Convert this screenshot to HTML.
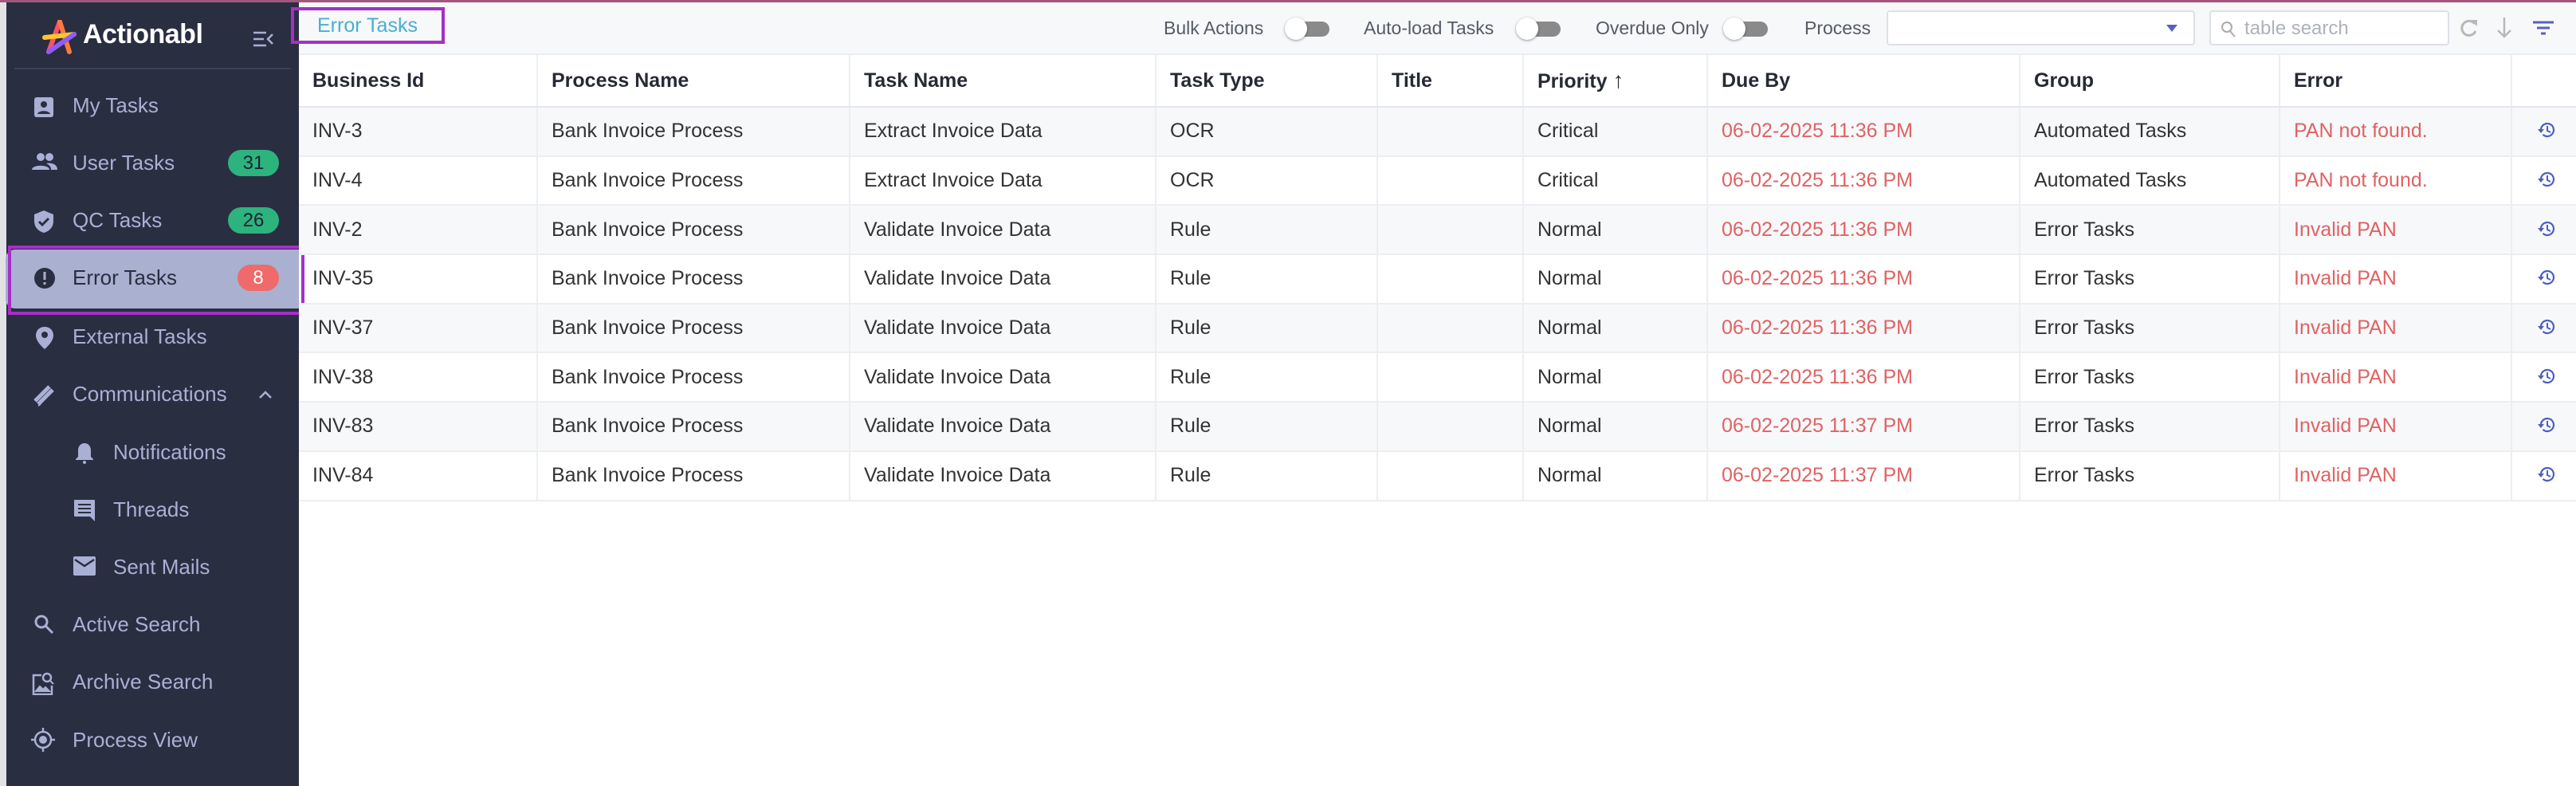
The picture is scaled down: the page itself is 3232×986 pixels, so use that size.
<!DOCTYPE html>
<html><head><meta charset="utf-8"><style>
*{box-sizing:border-box;margin:0;padding:0}
body{width:3232px;height:986px;overflow:hidden;background:#fff;font-family:"Liberation Sans",sans-serif;position:relative}
.topline{position:absolute;left:0;top:0;width:3232px;height:3px;background:#a4557e;z-index:5}
.strip{position:absolute;left:0;top:0;width:8px;height:986px;background:#e2e2e4}
.side{position:absolute;left:8px;top:0;width:367px;height:986px;background:#2a2e41}
.logo{position:absolute;left:96px;top:24px;font-size:34px;font-weight:bold;color:#fff;letter-spacing:-0.5px}
.div{position:absolute;left:10px;top:85px;width:347px;height:2px;background:#3d4256}
.nav{position:absolute;left:0;width:367px;height:60px;color:#a9b0d4;font-size:26px;line-height:60px}
.nav span.t{position:absolute;left:83px}
.nav.sub span.t{left:134px}
.nav svg{position:absolute;top:17px}
.badge{position:absolute;right:25px;top:14px;width:64px;height:33px;border-radius:17px;background:#2db37e;color:#1b2230;font-size:24px;line-height:33px;text-align:center}
.sel{position:absolute;left:7px;top:313px;width:368px;height:74px;background:#a9b0d0;border-radius:12px 0 0 12px}
.pbox{position:absolute;border:4px solid #a52fc7}
.head{position:absolute;left:375px;top:3px;width:2857px;height:66px;background:#f7f8fa;border-bottom:2px solid #eceef2}
.crumb{position:absolute;left:375px;top:18px;font-size:25px;color:#4aaed0;padding-left:23px}
.lbl{position:absolute;top:22px;font-size:23px;color:#555a66}
.tog{position:absolute;top:22px;width:56px;height:28px}
.tog .tr{position:absolute;left:10px;top:5px;width:46px;height:19px;border-radius:10px;background:#8a8a8a}
.tog .kn{position:absolute;left:0;top:0;width:28px;height:28px;border-radius:50%;background:#fff;box-shadow:0 1px 3px rgba(0,0,0,.4)}
.box{position:absolute;top:13px;height:44px;background:#fff;border:2px solid #dde0e6;border-radius:4px}
table{position:absolute;left:375px;top:69px;border-collapse:collapse;table-layout:fixed;width:2857px}
td,th{height:61.7px;padding:0 0 0 17px;text-align:left;font-size:25px;color:#333;border-bottom:2px solid #eceef1;border-right:2px solid #eceef1;white-space:nowrap}
th{height:65px;font-weight:bold;color:#262a33;font-size:25px;border-bottom:2px solid #e4e6ea}
tr.o td{background:#f7f8fa}
td.r{color:#e06262}
</style></head><body>
<div class="topline"></div>
<div class="strip"></div>
<div class="side">
 <svg style="position:absolute;left:45px;top:25px" width="44" height="44" viewBox="0 0 44 44"><path d="M22 2 L8 40" stroke="#ff4f6d" stroke-width="6" stroke-linecap="round"/><path d="M22 2 L34 40" stroke="#ff7a3d" stroke-width="6" stroke-linecap="round"/><path d="M3 22 L40 18" stroke="#ffc62e" stroke-width="6" stroke-linecap="round"/><path d="M8 40 L40 18" stroke="#8e5cf7" stroke-width="6" stroke-linecap="round"/></svg>
 <div class="logo">Actionabl</div>
 <svg style="position:absolute;left:308px;top:38px" width="28" height="22" viewBox="0 0 28 22"><path d="M2 3h16M2 11h13M2 19h16M26 5l-6 6 6 6" stroke="#a9b0d4" stroke-width="2.5" fill="none"/></svg>
 <div class="div"></div>
</div>
<div class="sel"></div>
<div style="position:absolute;left:8px;top:0;width:367px;height:986px">
 <div class="nav" style="top:102px"><svg style="left:34px" width="26" height="28" viewBox="0 0 26 28"><rect x="1" y="3" width="24" height="25" rx="3" fill="#a9b0d4"/><circle cx="13" cy="12" r="4" fill="#2a2e41"/><path d="M5 24c1-5 15-5 16 0z" fill="#2a2e41"/></svg><span class="t">My Tasks</span></div>
 <div class="nav" style="top:174px"><svg style="left:32px" width="32" height="24" viewBox="0 0 32 24"><circle cx="11" cy="6" r="5" fill="#a9b0d4"/><circle cx="22" cy="6" r="5" fill="#a9b0d4"/><path d="M0 22c0-7 22-7 22 0zM18 14c5-1 14 0 14 8h-8c0-4-2-6-6-8z" fill="#a9b0d4"/></svg><span class="t">User Tasks</span><div class="badge">31</div></div>
 <div class="nav" style="top:246px"><svg style="left:34px" width="26" height="30" viewBox="0 0 26 30"><path d="M13 1L1 6v8c0 8 5 13 12 15 7-2 12-7 12-15V6z" fill="#a9b0d4"/><path d="M7 15l4 4 8-8" stroke="#2a2e41" stroke-width="3" fill="none"/></svg><span class="t">QC Tasks</span><div class="badge">26</div></div>
 <div class="nav" style="top:318px;color:#2a2e41"><svg style="left:34px" width="28" height="28" viewBox="0 0 28 28"><circle cx="14" cy="14" r="13" fill="#2a2e41"/><rect x="12.5" y="6" width="3" height="10" fill="#a9b0d0"/><rect x="12.5" y="19" width="3" height="3" fill="#a9b0d0"/></svg><span class="t">Error Tasks</span><div class="badge" style="background:#ef6a6a;color:#fff;width:52px">8</div></div>
 <div class="nav" style="top:392px"><svg style="left:36px" width="24" height="30" viewBox="0 0 24 30"><path d="M12 1C5 1 1 6 1 12c0 8 11 17 11 17s11-9 11-17C23 6 19 1 12 1z" fill="#a9b0d4"/><circle cx="12" cy="11" r="4" fill="#2a2e41"/></svg><span class="t">External Tasks</span></div>
 <div class="nav" style="top:464px"><svg style="left:32px" width="30" height="30" viewBox="0 0 30 30"><path d="M4 22L22 4M8 26L26 8" stroke="#a9b0d4" stroke-width="5"/><path d="M8 28a8 8 0 0 0 4-6" stroke="#a9b0d4" stroke-width="2" fill="none"/></svg><span class="t">Communications</span><svg style="left:316px;top:25px" width="18" height="12" viewBox="0 0 18 12"><path d="M2 10l7-7 7 7" stroke="#a9b0d4" stroke-width="2.5" fill="none"/></svg></div>
 <div class="nav sub" style="top:537px"><svg style="left:86px" width="24" height="28" viewBox="0 0 24 28"><path d="M12 2c-5 0-8 4-8 9v8l-3 3v1h22v-1l-3-3v-8c0-5-3-9-8-9z" fill="#a9b0d4"/><circle cx="12" cy="26" r="2" fill="#a9b0d4"/></svg><span class="t">Notifications</span></div>
 <div class="nav sub" style="top:609px"><svg style="left:84px" width="28" height="30" viewBox="0 0 28 30"><path d="M2 1h24a1 1 0 0 1 1 1v26l-6-6H2a1 1 0 0 1-1-1V2a1 1 0 0 1 1-1z" fill="#a9b0d4"/><path d="M6 7h16M6 12h16M6 17h16" stroke="#2a2e41" stroke-width="2"/></svg><span class="t">Threads</span></div>
 <div class="nav sub" style="top:681px"><svg style="left:84px" width="28" height="24" viewBox="0 0 28 24"><rect x="0" y="0" width="28" height="24" rx="2" fill="#a9b0d4"/><path d="M2 4l12 8 12-8" stroke="#2a2e41" stroke-width="2.5" fill="none"/></svg><span class="t">Sent Mails</span></div>
 <div class="nav" style="top:753px"><svg style="left:34px" width="26" height="26" viewBox="0 0 26 26"><circle cx="10" cy="10" r="7" stroke="#a9b0d4" stroke-width="3" fill="none"/><path d="M15 15l9 9" stroke="#a9b0d4" stroke-width="3"/></svg><span class="t">Active Search</span></div>
 <div class="nav" style="top:825px"><svg style="left:32px" width="28" height="30" viewBox="0 0 28 30"><path d="M12 5H2v24h23V18" stroke="#a9b0d4" stroke-width="2.5" fill="none"/><circle cx="19" cy="8" r="5" stroke="#a9b0d4" stroke-width="2.5" fill="none"/><path d="M23 12l4 4M5 25l5-6 4 4 3-3 5 5z" stroke="#a9b0d4" stroke-width="2" fill="#a9b0d4"/></svg><span class="t">Archive Search</span></div>
 <div class="nav" style="top:898px"><svg style="left:31px;top:15px" width="30" height="30" viewBox="0 0 30 30"><circle cx="15" cy="15" r="10" stroke="#a9b0d4" stroke-width="2.5" fill="none"/><circle cx="15" cy="15" r="5" fill="#a9b0d4"/><path d="M15 0v5M15 25v5M0 15h5M25 15h5" stroke="#a9b0d4" stroke-width="2.5"/></svg><span class="t">Process View</span></div>
</div>
<div class="pbox" style="left:10px;top:308px;width:372px;height:87px"></div>
<div class="head"></div>
<div class="crumb">Error Tasks</div>
<div class="pbox" style="left:365px;top:9px;width:193px;height:46px"></div>
<div class="lbl" style="left:1460px">Bulk Actions</div>
<div class="tog" style="left:1612px"><div class="tr"></div><div class="kn"></div></div>
<div class="lbl" style="left:1711px">Auto-load Tasks</div>
<div class="tog" style="left:1902px"><div class="tr"></div><div class="kn"></div></div>
<div class="lbl" style="left:2002px">Overdue Only</div>
<div class="tog" style="left:2162px"><div class="tr"></div><div class="kn"></div></div>
<div class="lbl" style="left:2264px">Process</div>
<div class="box" style="left:2367px;width:387px"><svg style="position:absolute;right:20px;top:16px" width="14" height="9" viewBox="0 0 14 9"><path d="M0 0h14L7 9z" fill="#5562c0"/></svg></div>
<div class="box" style="left:2772px;width:301px"><svg style="position:absolute;left:12px;top:11px" width="20" height="22" viewBox="0 0 20 22"><circle cx="8" cy="8" r="6" stroke="#aaa" stroke-width="2" fill="none"/><path d="M12 13l6 7" stroke="#aaa" stroke-width="2"/></svg><span style="position:absolute;left:42px;top:7px;font-size:24px;color:#aeb2b8">table search</span></div>
<svg style="position:absolute;left:3086px;top:22px" width="24" height="26" viewBox="0 0 24 26"><path d="M19 8a9 9 0 1 0 1 9" stroke="#b8b8b8" stroke-width="3" fill="none"/><path d="M14 3h8v8z" fill="#b8b8b8"/></svg>
<svg style="position:absolute;left:3132px;top:20px" width="20" height="28" viewBox="0 0 20 28"><path d="M10 2v24M2 18l8 8 8-8" stroke="#b8b8b8" stroke-width="2.5" fill="none"/></svg>
<svg style="position:absolute;left:3178px;top:26px" width="26" height="18" viewBox="0 0 26 18"><path d="M0 2h26M5 9h16M10 16h6" stroke="#5562c0" stroke-width="3"/></svg>
<table>
<colgroup><col style="width:299px"><col style="width:392px"><col style="width:384px"><col style="width:278px"><col style="width:183px"><col style="width:231px"><col style="width:392px"><col style="width:326px"><col style="width:291px"><col style="width:81px"></colgroup>
<tr><th>Business Id</th><th>Process Name</th><th>Task Name</th><th>Task Type</th><th>Title</th><th>Priority <span style="font-weight:normal;font-size:28px">&#8593;</span></th><th>Due By</th><th>Group</th><th>Error</th><th style="border-right:none"></th></tr>
<tr class="o"><td>INV-3</td><td>Bank Invoice Process</td><td>Extract Invoice Data</td><td>OCR</td><td></td><td>Critical</td><td class="r">06-02-2025 11:36 PM</td><td>Automated Tasks</td><td class="r">PAN not found.</td><td class="h"></td></tr>
<tr><td>INV-4</td><td>Bank Invoice Process</td><td>Extract Invoice Data</td><td>OCR</td><td></td><td>Critical</td><td class="r">06-02-2025 11:36 PM</td><td>Automated Tasks</td><td class="r">PAN not found.</td><td class="h"></td></tr>
<tr class="o"><td>INV-2</td><td>Bank Invoice Process</td><td>Validate Invoice Data</td><td>Rule</td><td></td><td>Normal</td><td class="r">06-02-2025 11:36 PM</td><td>Error Tasks</td><td class="r">Invalid PAN</td><td class="h"></td></tr>
<tr><td>INV-35</td><td>Bank Invoice Process</td><td>Validate Invoice Data</td><td>Rule</td><td></td><td>Normal</td><td class="r">06-02-2025 11:36 PM</td><td>Error Tasks</td><td class="r">Invalid PAN</td><td class="h"></td></tr>
<tr class="o"><td>INV-37</td><td>Bank Invoice Process</td><td>Validate Invoice Data</td><td>Rule</td><td></td><td>Normal</td><td class="r">06-02-2025 11:36 PM</td><td>Error Tasks</td><td class="r">Invalid PAN</td><td class="h"></td></tr>
<tr><td>INV-38</td><td>Bank Invoice Process</td><td>Validate Invoice Data</td><td>Rule</td><td></td><td>Normal</td><td class="r">06-02-2025 11:36 PM</td><td>Error Tasks</td><td class="r">Invalid PAN</td><td class="h"></td></tr>
<tr class="o"><td>INV-83</td><td>Bank Invoice Process</td><td>Validate Invoice Data</td><td>Rule</td><td></td><td>Normal</td><td class="r">06-02-2025 11:37 PM</td><td>Error Tasks</td><td class="r">Invalid PAN</td><td class="h"></td></tr>
<tr><td>INV-84</td><td>Bank Invoice Process</td><td>Validate Invoice Data</td><td>Rule</td><td></td><td>Normal</td><td class="r">06-02-2025 11:37 PM</td><td>Error Tasks</td><td class="r">Invalid PAN</td><td class="h"></td></tr>
</table>
<script>
document.querySelectorAll('td.h').forEach(function(td){td.style.borderRight='none';td.innerHTML='<svg width="22" height="22" viewBox="0 0 22 22" style="margin-left:15px;vertical-align:-2px"><path d="M4 11a8 8 0 1 1 2.5 5.8" stroke="#4b5fc0" stroke-width="2.2" fill="none"/><path d="M0 10h8l-4 5z" fill="#4b5fc0"/><path d="M12 6v6l4 2" stroke="#4b5fc0" stroke-width="2" fill="none"/></svg>';});
</script>
</body></html>
